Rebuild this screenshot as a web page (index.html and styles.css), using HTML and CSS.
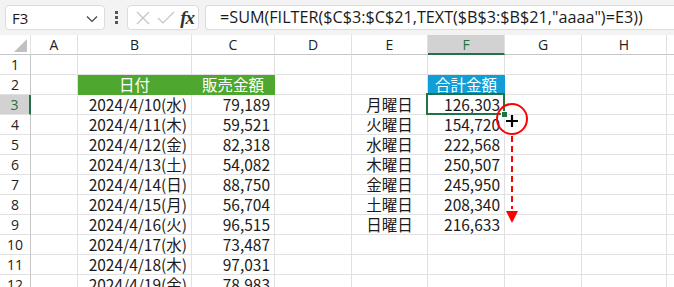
FILE: index.html
```html
<!DOCTYPE html>
<html lang="ja">
<head>
<meta charset="UTF-8">
<title>FILTER TEXT aaaa</title>
<link rel="stylesheet" href="styles.css">
</head>
<body>
<div class="toolbar">
    <div class="namebox">
        <span>F3</span>
        <svg class="chev" width="12" height="8" viewBox="0 0 12 8"><path d="M1 1.5 L6 6.5 L11 1.5" fill="none" stroke="#444" stroke-width="1.2"/></svg>
    </div>
    <div class="dots"><i></i><i></i><i></i></div>
    <div class="fxbox">
        <svg width="16" height="16" viewBox="0 0 16 16"><path d="M2 2 L14 14 M14 2 L2 14" stroke="#c4c4c4" stroke-width="1.2"/></svg>
        <svg width="18" height="16" viewBox="0 0 18 16"><path d="M1 8 L6 13 L17 2" fill="none" stroke="#c4c4c4" stroke-width="1.2"/></svg>
        <span class="fx">fx</span>
    </div>
    <div class="formula">=SUM(FILTER($C$3:$C$21,TEXT($B$3:$B$21,"aaaa")=E3))</div>
</div>

<div class="sheet">
    <div class="hd corner"><span class="tri"></span></div>
    <div class="hd">A</div>
    <div class="hd">B</div>
    <div class="hd">C</div>
    <div class="hd">D</div>
    <div class="hd">E</div>
    <div class="hd on">F</div>
    <div class="hd">G</div>
    <div class="hd">H</div>
    <div class="hd"></div>

    <div class="rh">1</div>
    <div class="c"></div><div class="c"></div><div class="c"></div><div class="c"></div><div class="c"></div><div class="c"></div><div class="c"></div><div class="c"></div><div class="c"></div>

    <div class="rh">2</div>
    <div class="c"></div>
    <div class="c green">日付</div>
    <div class="c green">販売金額</div>
    <div class="c"></div><div class="c"></div>
    <div class="c blue">合計金額</div>
    <div class="c"></div><div class="c"></div><div class="c"></div>

    <div class="rh on">3</div>
    <div class="c"></div><div class="c r">2024/4/10(水)</div><div class="c r">79,189</div><div class="c"></div>
    <div class="c m">月曜日</div><div class="c r sel">126,303</div><div class="c"></div><div class="c"></div><div class="c"></div>

    <div class="rh">4</div>
    <div class="c"></div><div class="c r">2024/4/11(木)</div><div class="c r">59,521</div><div class="c"></div>
    <div class="c m">火曜日</div><div class="c r">154,720</div><div class="c"></div><div class="c"></div><div class="c"></div>

    <div class="rh">5</div>
    <div class="c"></div><div class="c r">2024/4/12(金)</div><div class="c r">82,318</div><div class="c"></div>
    <div class="c m">水曜日</div><div class="c r">222,568</div><div class="c"></div><div class="c"></div><div class="c"></div>

    <div class="rh">6</div>
    <div class="c"></div><div class="c r">2024/4/13(土)</div><div class="c r">54,082</div><div class="c"></div>
    <div class="c m">木曜日</div><div class="c r">250,507</div><div class="c"></div><div class="c"></div><div class="c"></div>

    <div class="rh">7</div>
    <div class="c"></div><div class="c r">2024/4/14(日)</div><div class="c r">88,750</div><div class="c"></div>
    <div class="c m">金曜日</div><div class="c r">245,950</div><div class="c"></div><div class="c"></div><div class="c"></div>

    <div class="rh">8</div>
    <div class="c"></div><div class="c r">2024/4/15(月)</div><div class="c r">56,704</div><div class="c"></div>
    <div class="c m">土曜日</div><div class="c r">208,340</div><div class="c"></div><div class="c"></div><div class="c"></div>

    <div class="rh">9</div>
    <div class="c"></div><div class="c r">2024/4/16(火)</div><div class="c r">96,515</div><div class="c"></div>
    <div class="c m">日曜日</div><div class="c r">216,633</div><div class="c"></div><div class="c"></div><div class="c"></div>

    <div class="rh">10</div>
    <div class="c"></div><div class="c r">2024/4/17(水)</div><div class="c r">73,487</div><div class="c"></div>
    <div class="c"></div><div class="c"></div><div class="c"></div><div class="c"></div><div class="c"></div>

    <div class="rh">11</div>
    <div class="c"></div><div class="c r">2024/4/18(木)</div><div class="c r">97,031</div><div class="c"></div>
    <div class="c"></div><div class="c"></div><div class="c"></div><div class="c"></div><div class="c"></div>

    <div class="rh">12</div>
    <div class="c"></div><div class="c r">2024/4/19(金)</div><div class="c r">78,983</div><div class="c"></div>
    <div class="c"></div><div class="c"></div><div class="c"></div><div class="c"></div><div class="c"></div>

    <svg class="drag" width="40" height="130" viewBox="0 0 40 130">
        <circle cx="20" cy="18" r="15" fill="none" stroke="#f00" stroke-width="2"/>
        <path d="M20 14 V26 M14 20 H26" stroke="#000" stroke-width="2.2"/>
        <path d="M20 35 V108" stroke="#f00" stroke-width="2" stroke-dasharray="6 4"/>
        <path d="M14 110 H26 L20 122 Z" fill="#f00"/>
    </svg>
</div>
</body>
</html>
```

FILE: styles.css
```css
:root {
    --grid: #e1e1e1;
    --head-line: #c6c6c6;
    --select: #217346;
    --text: #1a1a1a;
}

body {
    margin: 0;
    background: #fff;
    color: var(--text);
    font-family: "Noto Sans CJK JP", "Noto Sans", sans-serif;
    overflow: hidden;
}

.toolbar {
    height: 35px;
    box-sizing: border-box;
    padding: 5px 0 5px 5px;
    background: #f3f3f3;
    display: flex;
    align-items: stretch;
}

.namebox {
    width: 100px;
    box-sizing: border-box;
    background: #fff;
    border: 1px solid #dcdcdc;
    border-radius: 4px;
    display: flex;
    align-items: center;
    justify-content: space-between;
    padding: 0 6px 0 6px;
    font-family: "Open Sans", "Liberation Sans", sans-serif;
    font-size: 15px;
}

.chev {
    margin-top: 2px;
}

.dots {
    width: 22px;
    display: flex;
    flex-direction: column;
    align-items: center;
    justify-content: center;
    gap: 2px;
}

.dots i {
    width: 3px;
    height: 3px;
    background: #555;
}

.fxbox {
    width: 72px;
    box-sizing: border-box;
    background: #fff;
    border: 1px solid #dcdcdc;
    border-radius: 4px;
    display: flex;
    align-items: center;
    justify-content: space-between;
    padding: 0 4px 0 7px;
}

.fx {
    font-family: "Liberation Serif", serif;
    font-style: italic;
    font-weight: bold;
    font-size: 19px;
    color: #333;
    letter-spacing: -1px;
}

.formula {
    flex: 1;
    margin-left: 6px;
    background: #fff;
    border: 1px solid #dcdcdc;
    border-right: none;
    border-radius: 4px 0 0 4px;
    padding-left: 14px;
    font-family: "Open Sans", "Liberation Sans", sans-serif;
    font-size: 16.2px;
    line-height: 23px;
    white-space: nowrap;
}

.sheet {
    position: relative;
    display: grid;
    grid-template-columns: 31px 47px 114px 83px 77px 76px 77px 77px 85px 80px;
    grid-auto-rows: 20px;
}

.hd {
    box-sizing: border-box;
    border-right: 1px solid var(--grid);
    border-bottom: 1px solid var(--head-line);
    font-family: "Open Sans", "Liberation Sans", sans-serif;
    font-size: 14px;
    text-align: center;
    line-height: 19px;
    color: #222;
}

.hd.on {
    background: #d2d2d2;
    color: var(--select);
    border-bottom: 2px solid var(--select);
}

.corner {
    position: relative;
}

.tri {
    position: absolute;
    right: 3px;
    bottom: 2px;
    width: 13px;
    height: 13px;
    background: #c0c0c0;
    clip-path: polygon(100% 0, 100% 100%, 0 100%);
}

.rh {
    box-sizing: border-box;
    border-right: 1px solid var(--head-line);
    border-bottom: 1px solid var(--grid);
    font-family: "Open Sans", "Liberation Sans", sans-serif;
    font-size: 14px;
    text-align: center;
    line-height: 19px;
    color: #222;
}

.rh.on {
    background: #d2d2d2;
    color: var(--select);
    border-right: 2px solid var(--select);
}

.c {
    box-sizing: border-box;
    border-right: 1px solid var(--grid);
    border-bottom: 1px solid var(--grid);
    font-size: 15.5px;
    line-height: 19px;
    padding: 0 4px;
    white-space: nowrap;
}

.r {
    text-align: right;
}

.m {
    text-align: center;
}

.green {
    background: #4ea72e;
    border-color: #4ea72e;
    color: #fff;
    text-align: center;
}

.blue {
    background: #0f9ed5;
    border-color: #0f9ed5;
    color: #fff;
    text-align: center;
}

.sel {
    position: relative;
}

.sel::after {
    content: "";
    position: absolute;
    left: -2px;
    top: -2px;
    right: -1px;
    bottom: -1px;
    border: 2px solid var(--select);
}

.sel::before {
    content: "";
    position: absolute;
    right: -4px;
    bottom: -4px;
    width: 5px;
    height: 5px;
    background: var(--select);
    border: 1px solid #fff;
    z-index: 1;
}

.drag {
    position: absolute;
    left: 492px;
    top: 66px;
}
```
